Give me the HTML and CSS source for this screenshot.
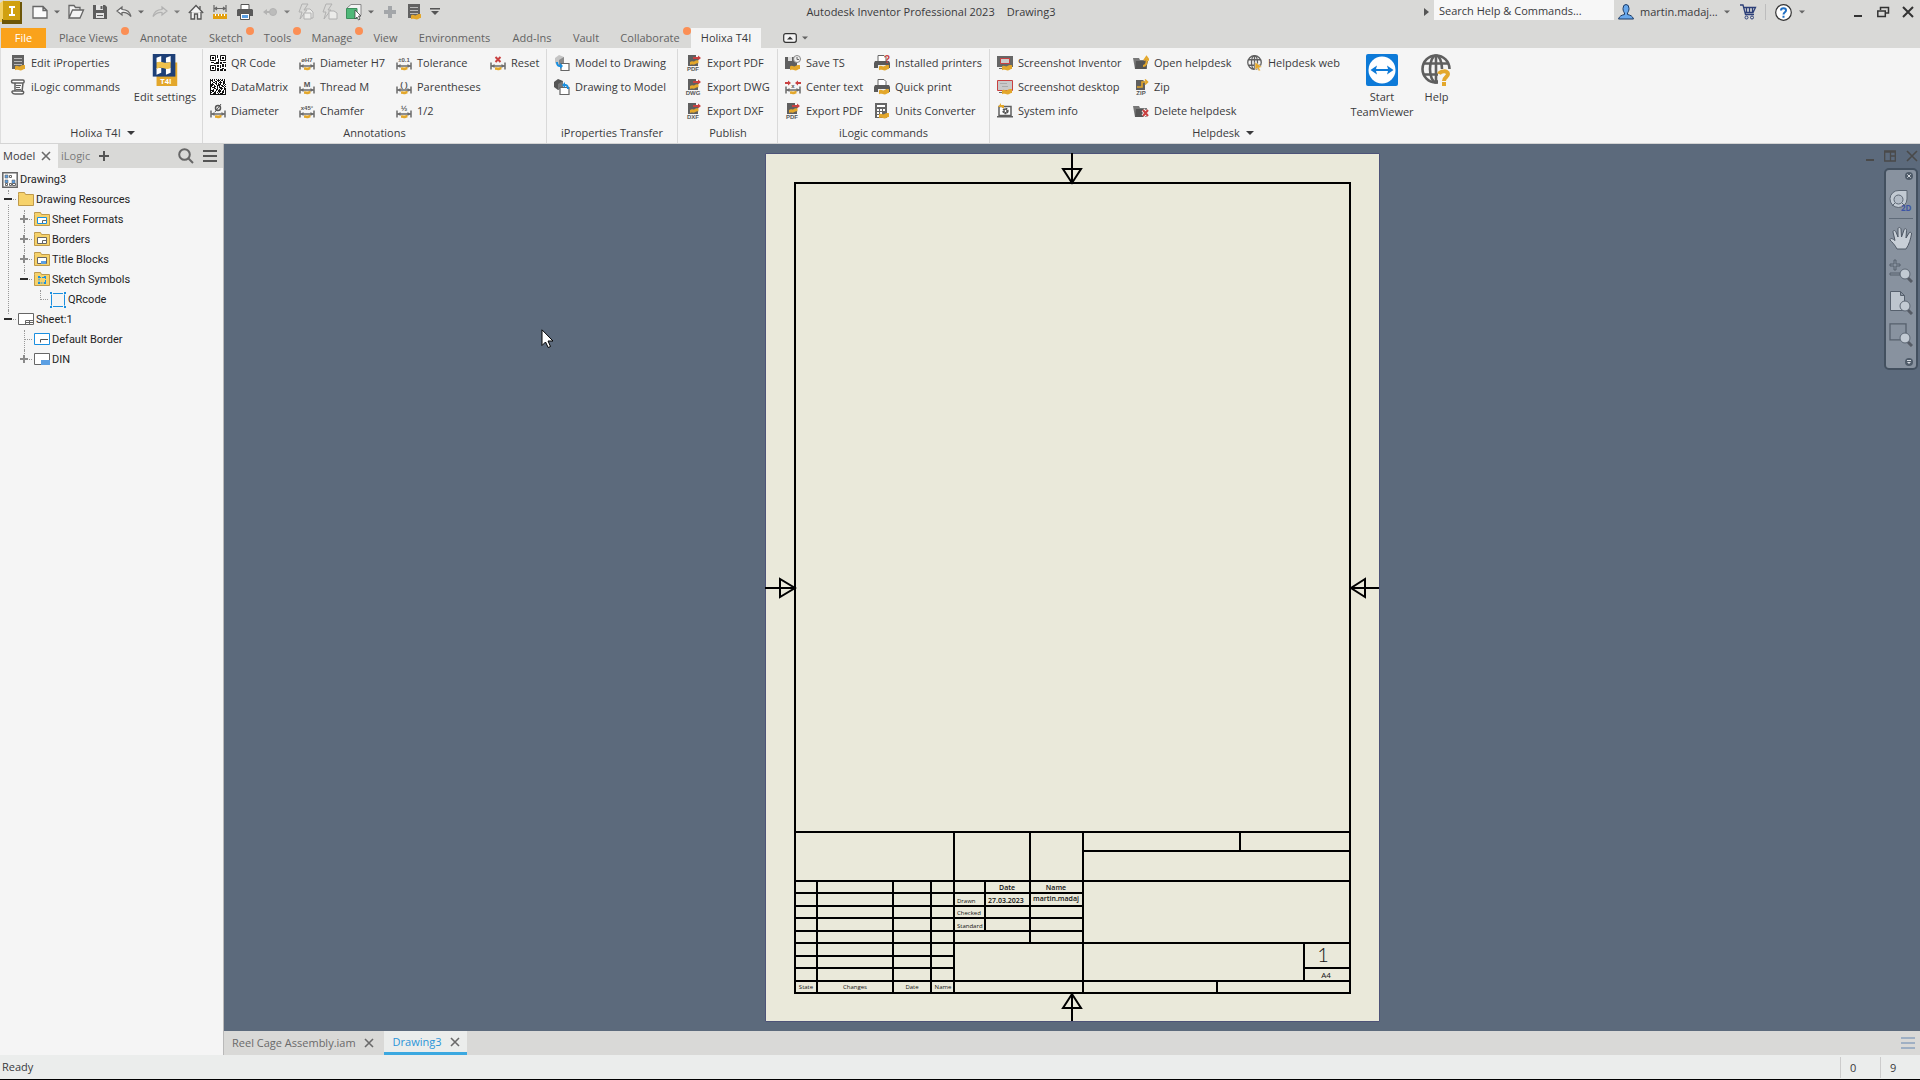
FILE: index.html
```html
<!DOCTYPE html>
<html lang="en">
<head>
<meta charset="utf-8">
<meta name="viewport" content="width=device-width, initial-scale=1">
<title>Autodesk Inventor Professional 2023 - Drawing3</title>
<link rel="stylesheet" href="styles.css">
</head>
<body>
<svg class="sprite" aria-hidden="true">
  <symbol id="wave" viewBox="0 0 16 16"><path fill="#e3a72b" d="M5 11.5c2-1.800 3.500 1 5.500-.4 1.400-1.200 2.800-1.300 4.500-.8v3.700c-1.700-.5-2.300 1.400-4.400 1.400-2-.1-3-1.500-5.600-.2z"/></symbol>
  <symbol id="caret" viewBox="0 0 8 8"><path fill="currentColor" d="M0 2h8L4 6z"/></symbol>
  <symbol id="cross" viewBox="0 0 10 10"><path fill="none" stroke="currentColor" stroke-width="1.600" d="M1 1l8 8M9 1L1 9"/></symbol>
  <symbol id="burger" viewBox="0 0 14 14"><path fill="none" stroke="currentColor" stroke-width="2" d="M0 2h14M0 7h14M0 12h14"/></symbol>
  <symbol id="dim" viewBox="0 0 16 16"><path fill="none" stroke="#6b6b6b" stroke-width="1.500" d="M1 7.500v7M15 7.500v7M1 11h14"/><path fill="#6b6b6b" d="M1.500 11l3-2v4zM14.500 11l-3-2v4z"/><path fill="#e3a72b" d="M5 12.500c2-1 3 .6 4.500-.2.800-.4 1.500-.3 2 0v2.200c-1.500-.3-2 1-3.500.8-1-.1-1.700-.9-3-.3z"/></symbol>
  <symbol id="props" viewBox="0 0 16 16"><path fill="#616161" d="M2 0h12v14H2z"/><path stroke="#b9b9b9" d="M4 3.500h8M4 6.500h8M4 9.500h8"/><use href="#wave"/></symbol>
  <symbol id="script" viewBox="0 0 16 16"><path fill="#fff" stroke="#5f5f5f" stroke-width="1.500" d="M3 1h10c1.500 0 1.500 3 0 3H3C1 4 1 1 3 1zM5 4v8M13 4l-1 9M3 12h9c2.500 0 2 3 0 3H5c-3 0-4-3-2-3z"/><path stroke="#5f5f5f" stroke-width="1.200" d="M6 6.500h5M6 8.500h4M6 10.500h5"/></symbol>
  <symbol id="qr" viewBox="0 0 16 16"><path fill="#fff" d="M0 0h16v16H0z"/><path fill="none" stroke="#111" d="M.5.5h5v5h-5zM10.500.5h5v5h-5zM.5 10.500h5v5h-5z"/><path fill="#111" d="M2 2h2v2H2zM12 2h2v2h-2zM2 12h2v2H2zM7 0h1v3H7zM8 4h1v3H8zM6 7h3v2H6zM1 7h3v1H1zM4 8h2v1H4zM10 7h2v2h-2zM13 7h3v1h-3zM7 10h2v2H7zM10 10h1v3h-1zM12 9h2v3h-2zM15 9h1v3h-1zM7 13h2v3H7zM10 14h3v2h-3zM12 13h2v1h-2zM14 14h2v2h-2z"/></symbol>
  <symbol id="matrix" viewBox="0 0 16 16"><path fill="#fff" d="M0 0h16v16H0z"/><path stroke="#111" stroke-dasharray="1 1" d="M0 .5h16"/><path stroke="#111" d="M.5 0v16M0 15.500h16"/><path stroke="#111" stroke-dasharray="2 1 1 2 3 1" d="M1 1.500h15M3 3.500h13M1 6.500h15M4 9.500h12M2 12.500h14"/><path stroke="#111" stroke-dasharray="1 2 2 1 1 1" d="M2 2.500h14M2 4.500h14M1 7.500h15M3 10.500h13M1 13.500h15"/><path stroke="#111" stroke-dasharray="3 2 1 1" d="M1 5.500h15M2 8.500h14M1 11.500h15M3 14.500h13"/></symbol>
  <symbol id="m2d" viewBox="0 0 16 16"><path fill="#c4c4c4" d="M1 3l4-3 5 2v6L5 11 1 8z"/><path fill="#8b8b8b" d="M5 5l5-3v6l-5 3z"/><path fill="#fff" stroke="#666" stroke-width="1.200" d="M7 8.500h8v7H7z"/><path fill="#1a8fe0" d="M2 7c0 4 2 5 4 5v2l3-3-3-3v2C4.500 10 4 9 4 7z"/></symbol>
  <symbol id="d2m" viewBox="0 0 16 16"><path fill="#555" d="M0 3l4-3 5 2v6l-5 3-4-3z"/><path fill="#777" d="M4 5l5-3v6l-5 3z"/><path fill="#fff" stroke="#666" stroke-width="1.200" d="M6 8.500h9v7H6z"/><path fill="#1a8fe0" d="M15 10c0-4-2-5-4-5V3L8 6l3 3V7c1.500 0 2 1 2 3z"/></symbol>
  <symbol id="exp" viewBox="0 0 16 16"><path fill="#5f5f5f" d="M2 0h8v2h2v9H2z"/><path fill="#c94040" d="M7 2h5V.5L15 3l-3 2.500V4H7z"/><path fill="#e3a72b" d="M4 7c2-1.500 3 0 4.500-.800C10 5 11 5 12.500 5.500v3C11 8 10 9 8.500 9.500 7 10 6 9 4 10z"/></symbol>
  <symbol id="savets" viewBox="0 0 16 16"><path fill="#5f5f5f" d="M0 2h12v12H0z"/><path fill="#ddd" d="M3 2h4v4H3z"/><circle cx="12" cy="4" r="3.500" fill="#eee" stroke="#888"/><path fill="none" stroke="#666" d="M12 2v2.500h2"/><use href="#wave"/></symbol>
  <symbol id="printer" viewBox="0 0 16 16"><path fill="#fff" stroke="#666" d="M4 .5h6l2 2V7H4z"/><path fill="#5a5a5a" d="M1 6h14l1 2v5H0V8z"/><path fill="#eee" d="M4 10h8v4H4z"/><use href="#wave"/></symbol>
  <symbol id="calc" viewBox="0 0 16 16"><path fill="#666" d="M1 0h12v15H1z"/><path fill="#fff" d="M3 2h8v2H3zM3 6h2v2H3zM6 6h2v2H6zM9 6h2v2H9zM3 9h2v2H3zM6 9h2v2H6zM3 12h2v2H3z"/><use href="#wave"/></symbol>
  <symbol id="shot" viewBox="0 0 16 16"><path fill="#666" d="M0 1h16v11H0z"/><path fill="#ccc" stroke="#c94040" d="M3.500 3.500h9v5h-9z"/><path fill="#666" d="M2 13h5v1H2z"/><use href="#wave"/></symbol>
  <symbol id="shotd" viewBox="0 0 16 16"><path fill="#c9c9c9" stroke="#c94040" d="M.5 1.500h15v10H.5z"/><path stroke="#aaa" d="M3 4.500h7M5 7.500h6"/><path fill="#666" d="M2 13h5v1H2z"/><use href="#wave"/></symbol>
  <symbol id="sysinfo" viewBox="0 0 16 16"><path fill="#fff" stroke="#5f5f5f" stroke-width="1.500" d="M2 3.500h12v9H2z"/><path fill="#5f5f5f" d="M0 13h16v1.500H0z"/><circle cx="8.500" cy="8" r="2.200" fill="none" stroke="#555" stroke-width="2" stroke-dasharray="1.700 .6"/><circle cx="8.500" cy="8" r="1.600" fill="none" stroke="#555"/><path fill="#e3a72b" d="M1 4l3-4v2h3v3H5V4z"/></symbol>
  <symbol id="folder" viewBox="0 0 16 16"><path fill="#777" d="M0 3h6l1 2h7v9H2z"/><path fill="#555" d="M3 6h12l-2 8H2z"/></symbol>
  <symbol id="fopen" viewBox="0 0 16 16"><use href="#folder"/><path fill="none" stroke="#e3a72b" stroke-width="2" d="M10 11c3 0 4-3 3.500-7M11 5.500L13.500 2 16 5.500"/></symbol>
  <symbol id="fdel" viewBox="0 0 16 16"><use href="#folder"/><path stroke="#f5f5f5" stroke-width="4" d="M10 7l6 6M16 7l-6 6"/><path stroke="#c94040" stroke-width="2" d="M10 7l5 6M15 7l-5 6"/></symbol>
  <symbol id="globe" viewBox="0 0 32 32"><g fill="none" stroke="#5f5f5f" stroke-width="2.600"><circle cx="15" cy="15" r="13.500"/><ellipse cx="15" cy="15" rx="6" ry="13.500"/><path d="M15 1v28M3 9.500h24M3 20.500h24"/></g></symbol>
  <symbol id="web" viewBox="0 0 16 16"><use href="#globe"/><path fill="#e3a72b" stroke="#f5f5f5" stroke-width=".5" d="M8 7l7 5-3 .5 1.500 3-2 .5-1-3-2.500 2z"/></symbol>
  <symbol id="helpglobe" viewBox="0 0 32 32"><use href="#globe"/><path fill="#f5f5f5" d="M17 15h15v17H17z"/><path fill="none" stroke="#e3a72b" stroke-width="4" d="M18 20c1-3 9-4 9 0 0 3-4 3-4 7"/><path fill="#e3a72b" d="M21 28h4v4h-4z"/></symbol>
  <symbol id="tv" viewBox="0 0 32 32"><path fill="#0d7ad8" d="M2 0h28q2 0 2 2v28q0 2-2 2H2q-2 0-2-2V2q0-2 2-2z"/><circle cx="16" cy="16" r="13.500" fill="#fff"/><path fill="#0d7ad8" d="M4.500 16l6.500-4.500-1 3.500h12l-1-3.500 6.500 4.500-6.500 4.500 1-3.500H10l1 3.500z"/></symbol>
  <symbol id="lens" viewBox="0 0 24 24"><path stroke="#565c66" stroke-width="3" d="M18 18l5 5"/><circle cx="16" cy="15" r="5" fill="#c2cad3" stroke="#5c6673"/></symbol>
  <symbol id="tfolder" viewBox="0 0 16 16"><path fill="#f6d26b" stroke="#bf9a4b" d="M.5 2.500v-2h6l1 2h8v11H.5z"/></symbol>
  <symbol id="t-draw" viewBox="0 0 16 16"><path fill="#fff" stroke="#666" stroke-width="1.500" d="M.8.8h14.400v14.400H.8z"/><path fill="#5b9fe3" stroke="#666" stroke-width=".6" d="M3 3h3v3H3zM3 8h3v3H3zM10 8h3v4h-3z"/><path fill="#fff" stroke="#666" d="M7.500 3.500h2v2h-2zM3.500 11.500h2v2h-2zM7.500 11.500h2v2h-2zM10.500 11.500h3v2h-3z"/></symbol>
  <symbol id="t-fmt" viewBox="0 0 16 16"><use href="#tfolder"/><path fill="#fff" stroke="#1a8fe0" d="M3.500 5.500h9v6h-9z"/><path fill="none" stroke="#666" d="M8.500 11V8.500h4"/></symbol>
  <symbol id="t-bord" viewBox="0 0 16 16"><use href="#tfolder"/><path fill="#fff" stroke="#666" d="M3.500 5.500h9v6h-9zM8.500 11.500v-3h4"/></symbol>
  <symbol id="t-title" viewBox="0 0 16 16"><use href="#tfolder"/><path fill="#fff" stroke="#666" d="M3.500 5.500h9v6h-9z"/><path fill="#5b9fe3" d="M7 9h5v3H7z"/></symbol>
  <symbol id="t-sym" viewBox="0 0 16 16"><use href="#tfolder"/><path fill="none" stroke="#1a8fe0" stroke-dasharray="2 1" d="M5 5.500h6.500V11H5z"/><path fill="#1a8fe0" d="M4 4h2v2H4zM10 4h2v2h-2zM4 10h2v2H4zM10 10h2v2h-2z"/></symbol>
  <symbol id="t-qr" viewBox="0 0 16 16"><path fill="none" stroke="#1a8fe0" d="M1.500 2.500v11M14.500 2.500v11M3 1.500h10M3 14.500h10"/><path fill="#1a8fe0" d="M0 0h2v2H0zM14 0h2v2h-2zM0 14h2v2H0zM14 14h2v2h-2z"/></symbol>
  <symbol id="t-sheet" viewBox="0 0 16 16"><path fill="#fff" stroke="#666" d="M.5 1.500h15v11H.5zM7.500 12.500v-4h8M7.500 10.500h8M11.500 8.500v4"/></symbol>
  <symbol id="t-def" viewBox="0 0 16 16"><path fill="#fff" stroke="#1a8fe0" d="M.5 1.500h15v11H.5z"/><path fill="none" stroke="#555" d="M6.500 10.500v-3H14"/></symbol>
  <symbol id="t-din" viewBox="0 0 16 16"><path fill="#fff" stroke="#666" d="M.5 1.500h15v11H.5z"/><path fill="#5b9fe3" d="M7 8h9v5H7z"/></symbol>
</svg>

<header class="titlebar">
  <div class="quick">
    <button class="logo" aria-label="Application menu"><svg width="24" height="24" viewBox="0 0 24 24"><path fill="#f3cf62" d="M0 3l4-3v20l-2 2H0z"/><path fill="#6d5608" d="M2 19h18V2h2v22H2z"/><path fill="#d0a010" d="M3 1h17v19H3z"/><path fill="#fff" d="M9 6h6v2h-2v6h2v2H9v-2h2V8H9z"/></svg></button>
    <button class="q" aria-label="New"><svg width="16" height="16" viewBox="0 0 16 16"><path fill="#fbfbfb" stroke="#666" stroke-width="1.300" d="M1 2.500h10l4 4V14H1zM11 2.500v4h4"/></svg><svg class="dd"><use href="#caret"/></svg></button>
    <button class="q" aria-label="Open"><svg width="16" height="16" viewBox="0 0 16 16"><path fill="#f4f4f4" stroke="#666" stroke-width="1.300" d="M1 14V1.500h5l1.500 2H12V6M1 14L4.500 6H15.500L12 14z"/></svg></button>
    <button class="q" aria-label="Save"><svg width="16" height="16" viewBox="0 0 16 16"><path fill="#5d5d5d" d="M1 1h12l2 2v12H1z"/><path fill="#e4e4e4" d="M4 1h7v5H4zM4 9h8v5H4z"/><path fill="#5d5d5d" d="M8.500 2h2v3h-2zM5 11h6v1H5z"/></svg></button>
    <button class="q" aria-label="Undo"><svg width="16" height="16" viewBox="0 0 16 16"><path fill="#f4f4f4" stroke="#666" stroke-width="1.200" d="M6 3L1 7l5 4V8.500c4-.5 6 .5 9 4C14 8 11 5.500 6 5.500z"/></svg><svg class="dd"><use href="#caret"/></svg></button>
    <button class="q dim" aria-label="Redo"><svg width="16" height="16" viewBox="0 0 16 16"><path fill="none" stroke="#a8a8a8" stroke-width="1.200" d="M10 3l5 4-5 4V8.500c-4-.5-6 .5-9 4C2 8 5 5.500 10 5.500z"/></svg><svg class="dd"><use href="#caret"/></svg></button>
    <button class="q" aria-label="Home"><svg width="16" height="16" viewBox="0 0 16 16"><path fill="#f4f4f4" stroke="#555" stroke-width="1.300" d="M3 8v7h3.500v-5h3v5H13V8M.8 9L8 1.500 15.200 9M12 5V2"/></svg></button>
    <button class="q" aria-label="Measure"><svg width="16" height="16" viewBox="0 0 16 16"><path fill="none" stroke="#666" stroke-width="1.200" d="M2 1v7M14 1v7M2 4.500h12M5 3L3 4.500 5 6M11 3l2 1.500L11 6"/><path fill="#e3a010" d="M1 10h14v5H1z"/><path stroke="#fff" d="M3.500 10v2M6.500 10v2M9.500 10v2M12.500 10v2"/></svg></button>
    <button class="q" aria-label="Print"><svg width="18" height="16" viewBox="0 0 16 16"><path fill="#fff" stroke="#555" d="M4 .5h8V6H4z"/><path fill="#5a5a5a" d="M1 5h14l1 1v6H0V6z"/><path fill="#fff" stroke="#555" d="M3.500 9.500h9v6h-9z"/><path fill="#5b9fe3" d="M5 11h6v3H5z"/></svg></button>
    <button class="q dim" aria-label="Update view"><svg width="16" height="16" viewBox="0 0 16 16"><circle cx="11" cy="8" r="3.500" fill="#b5b5b5" stroke="#aaa"/><path fill="#aaa" d="M1 8l4-3v6zM5 7h3v2H5z"/></svg><svg class="dd"><use href="#caret"/></svg></button>
    <button class="q dim" aria-label="Update all"><svg width="16" height="16" viewBox="0 0 16 16"><path fill="#f0f0ee" stroke="#a8a8a8" d="M6 9V5h6l3 3v6H7z"/><path fill="#d9d9d7" stroke="#a8a8a8" d="M4 0h6L6 6h3l-7 9 2-7H1z"/><path fill="#f0f0ee" stroke="#a8a8a8" d="M6 9h7v6H6z"/></svg></button>
    <button class="q dim" aria-label="Update"><svg width="16" height="16" viewBox="0 0 16 16"><path fill="#d9d9d7" stroke="#a8a8a8" d="M4 0h6L6 6h3l-7 9 2-7H1z"/><path fill="#f0f0ee" stroke="#a8a8a8" d="M7 7h5l3 2v6H7z"/></svg></button>
    <button class="q" aria-label="Select"><svg width="16" height="16" viewBox="0 0 16 16"><path fill="#f4f4f4" stroke="#888" d="M1 4l4-3.500h10V11l-3 3.500"/><path fill="#4fb878" stroke="#3c8f5c" d="M.5 4.500H11v10H.5z"/><path fill="#fff" stroke="#444" stroke-width=".8" d="M9 6v9l2-2 1.500 3 1.500-.800L12.500 12H15z"/></svg><svg class="dd"><use href="#caret"/></svg></button>
    <button class="q" aria-label="Add"><svg width="16" height="16" viewBox="0 0 16 16"><path fill="#a3a6a9" d="M6 2h4v4h4v4h-4v4H6v-4H2V6h4z"/></svg></button>
    <button class="q" aria-label="iProperties"><svg width="16" height="16"><use href="#props"/></svg></button>
    <button class="q" aria-label="Customize toolbar"><svg width="10" height="10" viewBox="0 0 10 10"><path fill="#555" d="M0 1h10v1.500H0zM1 4h8L5 8z"/></svg></button>
  </div>
  <h1 class="caption"><span>Autodesk Inventor Professional 2023</span><span>Drawing3</span></h1>
  <div class="account">
    <svg class="arrow" width="5" height="8" viewBox="0 0 5 8"><path fill="#555" d="M0 0l5 4-5 4z"/></svg>
    <input class="search" type="text" aria-label="Search help and commands" placeholder="Search Help &amp; Commands...">
    <button class="user"><svg width="16" height="16" viewBox="0 0 16 16"><path fill="#68a8ec" stroke="#1c3b66" d="M5 4.500a3 4 0 016 0c0 2.500-1 3.500-1.500 4.500v1.500c3 .7 5 1.500 6 4.500H.5c1-3 3-3.800 6-4.500V9C6 8 5 7 5 4.500z"/></svg>martin.madaj...<svg class="dd"><use href="#caret"/></svg></button>
    <button class="cart" aria-label="App store"><svg width="16" height="16" viewBox="0 0 16 16"><path fill="none" stroke="#2c3f78" stroke-width="1.300" d="M0 1h3l2.500 9.500H14M3.500 3.500H15.500L13 8.500H5M6.500 4v4M9.500 4v4M12.500 4v4"/><circle cx="6.500" cy="13.500" r="1.500" fill="none" stroke="#2c3f78"/><circle cx="12" cy="13.500" r="1.500" fill="none" stroke="#2c3f78"/></svg></button>
    <button class="help" aria-label="Help"><svg width="17" height="17" viewBox="0 0 17 17"><circle cx="8.500" cy="8.500" r="7.800" fill="#fff" stroke="#333" stroke-width="1.200"/><path fill="none" stroke="#1f6fc4" stroke-width="2" d="M6 6.500c0-3 5-3 5 0 0 1.800-2.500 1.800-2.500 4M8.500 11.700v2"/></svg><svg class="dd"><use href="#caret"/></svg></button>
    <div class="winbtns">
      <button aria-label="Minimize"><svg width="12" height="12" viewBox="0 0 12 12"><path fill="#333" d="M2 9h8v2H2z"/></svg></button>
      <button aria-label="Restore"><svg width="12" height="12" viewBox="0 0 12 12"><path fill="none" stroke="#333" stroke-width="1.500" d="M3.500 4V1.500h8V7H9M.8 5h7.500v5.500H.8z"/></svg></button>
      <button aria-label="Close"><svg width="12" height="12" viewBox="0 0 12 12"><path stroke="#333" stroke-width="2" d="M1 1l10 10M11 1L1 11"/></svg></button>
    </div>
  </div>
</header>

<nav class="tabs" aria-label="Ribbon">
  <button class="tab file">File</button>
  <button class="tab dot">Place Views</button>
  <button class="tab">Annotate</button>
  <button class="tab dot">Sketch</button>
  <button class="tab dot">Tools</button>
  <button class="tab dot">Manage</button>
  <button class="tab">View</button>
  <button class="tab">Environments</button>
  <button class="tab">Add-Ins</button>
  <button class="tab">Vault</button>
  <button class="tab dot">Collaborate</button>
  <button class="tab active">Holixa T4I</button>
  <button class="tab fold" aria-label="Minimize ribbon"><svg width="14" height="10" viewBox="0 0 14 10"><rect x=".7" y=".7" width="12.600" height="8.600" rx="2" fill="#f4f4f4" stroke="#333" stroke-width="1.200"/><path fill="#333" d="M4 6.500h6L7 3.500z"/></svg><svg class="dd"><use href="#caret"/></svg></button>
</nav>

<div class="ribbon">
  <section class="group g-holixa">
    <div class="cols">
      <div class="col">
        <button class="cmd"><svg><use href="#props"/></svg>Edit iProperties</button>
        <button class="cmd"><svg><use href="#script"/></svg>iLogic commands</button>
      </div>
      <button class="big"><svg viewBox="0 0 26 34"><path fill="#e3a72b" d="M4 9h22v25H4z"/><path fill="#1d3f77" d="M0 0h24v24H0z"/><path fill="#fff" d="M4 4l5-2v7H4zM14 4l5-2v7h-5zM4 15h5v5l-5 2zM14 15h5v5l-5 2z"/><path fill="#f0c14b" d="M4 9c5-3 9 3 15-1v7c-6 3-9-3-15 1z"/><text class="t4i-text" x="14" y="32">T4I</text></svg>Edit settings</button>
    </div>
    <button class="label">Holixa T4I<svg class="dd"><use href="#caret"/></svg></button>
  </section>
  <section class="group g-annot">
    <div class="cols">
      <div class="col">
        <button class="cmd"><svg><use href="#qr"/></svg>QR Code</button>
        <button class="cmd"><svg><use href="#matrix"/></svg>DataMatrix</button>
        <button class="cmd"><svg viewBox="0 0 16 16"><use href="#dim"/><circle cx="8" cy="5" r="2.500" fill="none" stroke="#555" stroke-width="1.500"/><path stroke="#555" d="M5 9l6-8"/></svg>Diameter</button>
      </div>
      <div class="col">
        <button class="cmd"><svg viewBox="0 0 16 16"><use href="#dim"/><text class="glyph" x="8" y="7">øH7</text></svg>Diameter H7</button>
        <button class="cmd"><svg viewBox="0 0 16 16"><use href="#dim"/><text class="glyph glyph-l" x="8" y="8">M</text></svg>Thread M</button>
        <button class="cmd"><svg viewBox="0 0 16 16"><use href="#dim"/><text class="glyph" x="8" y="7">x45°</text></svg>Chamfer</button>
      </div>
      <div class="col">
        <button class="cmd"><svg viewBox="0 0 16 16"><use href="#dim"/><text class="glyph" x="8" y="7">±0.1</text></svg>Tolerance</button>
        <button class="cmd"><svg viewBox="0 0 16 16"><use href="#dim"/><text class="glyph glyph-l" x="8" y="8">( )</text></svg>Parentheses</button>
        <button class="cmd"><svg viewBox="0 0 16 16"><use href="#dim"/><text class="glyph glyph-l" x="8" y="8">½</text></svg>1/2</button>
      </div>
      <div class="col">
        <button class="cmd"><svg viewBox="0 0 16 16"><use href="#dim"/><path stroke="#c94040" stroke-width="2" d="M5.500 2l5 5M10.500 2l-5 5"/></svg>Reset</button>
      </div>
    </div>
    <div class="label">Annotations</div>
  </section>
  <section class="group g-transfer">
    <div class="cols">
      <div class="col">
        <button class="cmd"><svg><use href="#m2d"/></svg>Model to Drawing</button>
        <button class="cmd"><svg><use href="#d2m"/></svg>Drawing to Model</button>
      </div>
    </div>
    <div class="label">iProperties Transfer</div>
  </section>
  <section class="group g-publish">
    <div class="cols">
      <div class="col">
        <button class="cmd"><svg viewBox="0 0 16 16"><use href="#exp"/><text class="glyph" x="7" y="16">PDF</text></svg>Export PDF</button>
        <button class="cmd"><svg viewBox="0 0 16 16"><use href="#exp"/><text class="glyph" x="7" y="16">DWG</text></svg>Export DWG</button>
        <button class="cmd"><svg viewBox="0 0 16 16"><use href="#exp"/><text class="glyph" x="7" y="16">DXF</text></svg>Export DXF</button>
      </div>
    </div>
    <div class="label">Publish</div>
  </section>
  <section class="group g-ilogic">
    <div class="cols">
      <div class="col">
        <button class="cmd"><svg><use href="#savets"/></svg>Save TS</button>
        <button class="cmd"><svg viewBox="0 0 16 16"><use href="#dim"/><path fill="#c94040" d="M0 3h3V1.500L6 4 3 6.500V5H0zM16 3h-3V1.500L10 4l3 2.500V5h3z"/><text class="glyph" x="8" y="9">x</text></svg>Center text</button>
        <button class="cmd"><svg viewBox="0 0 16 16"><use href="#exp"/><text class="glyph" x="7" y="16">PDF</text></svg>Export PDF</button>
      </div>
      <div class="col">
        <button class="cmd"><svg viewBox="0 0 16 16"><use href="#printer"/><text class="glyph glyph-red" x="13" y="8">?</text></svg>Installed printers</button>
        <button class="cmd"><svg><use href="#printer"/></svg>Quick print</button>
        <button class="cmd"><svg><use href="#calc"/></svg>Units Converter</button>
      </div>
    </div>
    <div class="label">iLogic commands</div>
  </section>
  <section class="group g-help">
    <div class="cols">
      <div class="col">
        <button class="cmd"><svg><use href="#shot"/></svg>Screenshot Inventor</button>
        <button class="cmd"><svg><use href="#shotd"/></svg>Screenshot desktop</button>
        <button class="cmd"><svg><use href="#sysinfo"/></svg>System info</button>
      </div>
      <div class="col">
        <button class="cmd"><svg><use href="#fopen"/></svg>Open helpdesk</button>
        <button class="cmd"><svg viewBox="0 0 16 16"><path fill="#5f5f5f" d="M3 1h7l2 2v8H3z"/><path fill="none" stroke="#e3a72b" stroke-width="1.600" d="M4 8h5V3h6M12 .5L14.500 3 12 5.500"/><text class="glyph" x="8" y="16">ZIP</text></svg>Zip</button>
        <button class="cmd"><svg><use href="#fdel"/></svg>Delete helpdesk</button>
      </div>
      <div class="col">
        <button class="cmd"><svg><use href="#web"/></svg>Helpdesk web</button>
      </div>
      <button class="big"><svg><use href="#tv"/></svg>Start TeamViewer</button>
      <button class="big"><svg><use href="#helpglobe"/></svg>Help</button>
    </div>
    <button class="label">Helpdesk<svg class="dd"><use href="#caret"/></svg></button>
  </section>
</div>

<div class="main">
  <aside class="browser">
    <div class="browser-tabs">
      <button class="btab on">Model<svg class="x"><use href="#cross"/></svg></button>
      <button class="btab">iLogic</button>
      <button class="add" aria-label="Add panel"><svg width="10" height="10" viewBox="0 0 10 10"><path stroke="#555" stroke-width="2" d="M5 0v10M0 5h10"/></svg></button>
      <button class="find" aria-label="Search"><svg width="16" height="16" viewBox="0 0 16 16"><circle cx="6.500" cy="6.500" r="5.300" fill="none" stroke="#666" stroke-width="2"/><path stroke="#666" stroke-width="2" d="M10.500 10.500l4.500 4.500"/></svg></button>
      <button class="menu" aria-label="Panel menu"><svg width="14" height="14"><use href="#burger"/></svg></button>
    </div>
    <ul class="tree">
      <li><span class="node"><svg><use href="#t-draw"/></svg>Drawing3</span>
        <ul>
          <li class="open"><span class="node"><svg><use href="#tfolder"/></svg>Drawing Resources</span>
            <ul>
              <li class="shut"><span class="node"><svg><use href="#t-fmt"/></svg>Sheet Formats</span></li>
              <li class="shut"><span class="node"><svg><use href="#t-bord"/></svg>Borders</span></li>
              <li class="shut"><span class="node"><svg><use href="#t-title"/></svg>Title Blocks</span></li>
              <li class="open"><span class="node"><svg><use href="#t-sym"/></svg>Sketch Symbols</span>
                <ul><li><span class="node"><svg><use href="#t-qr"/></svg>QRcode</span></li></ul>
              </li>
            </ul>
          </li>
          <li class="open"><span class="node"><svg><use href="#t-sheet"/></svg>Sheet:1</span>
            <ul>
              <li><span class="node"><svg><use href="#t-def"/></svg>Default Border</span></li>
              <li class="shut"><span class="node"><svg><use href="#t-din"/></svg>DIN</span></li>
            </ul>
          </li>
        </ul>
      </li>
    </ul>
  </aside>

  <div class="work">
    <main class="canvas">
      <svg class="sheet" viewBox="0 0 614 868" role="img" aria-label="A4 drawing sheet">
        <path fill="#eae9da" stroke="#4d5378" d="M.5.5h614v868H.5z"/>
        <g fill="none" stroke="#000" stroke-width="2">
          <path d="M30 30h555v810H30z"/>
          <path d="M307 0v30M298 16h18l-9 14zM307 868v-28M298 855h18l-9-14zM0 435h30M15 426v18l15-9zM614 435h-28M600 426v18l-14-9z"/>
          <path d="M30 679h555M318 698h267M30 728h555M30 740h288M30 753h288M30 765h288M30 778h159M189 778h129M30 790h555M30 803h159M30 815h159M539 815h46M30 828h555"/>
          <path d="M52 728v112M128 728v112M166 728v112M189 679v161M220 728v50M265 679v111M318 679v161M475 679v19M452 828v12M539 790v38"/>
        </g>
        <g class="iso iso-m">
          <text x="242" y="737" class="mid">Date</text>
          <text x="291" y="737" class="mid">Name</text>
          <text x="223" y="750">27.03.2023</text>
          <text x="268" y="748">martin.madaj</text>
          <text x="561" y="825" class="mid iso-n">A4</text>
        </g>
        <g class="iso iso-s">
          <text x="192" y="750">Drawn</text>
          <text x="192" y="762">Checked</text>
          <text x="192" y="775">Standard</text>
          <text x="41" y="836" class="mid">State</text>
          <text x="90" y="836" class="mid">Changes</text>
          <text x="147" y="836" class="mid">Date</text>
          <text x="178" y="836" class="mid">Name</text>
        </g>
        <text x="558" y="809" class="iso iso-l mid">1</text>
      </svg>

      <div class="docbtns">
        <button aria-label="Minimize document"><svg width="12" height="12" viewBox="0 0 12 12"><path fill="#4a4a4a" d="M4 9h8v2H4z"/></svg></button>
        <button aria-label="Restore document"><svg width="12" height="12" viewBox="0 0 12 12"><path fill="none" stroke="#4a4a4a" stroke-width="1.300" d="M.7 1h10.600v10H.7zM.7 2h11M6.500 2v9M6.500 6h5"/></svg></button>
        <button aria-label="Close document"><svg width="12" height="12" viewBox="0 0 12 12"><path stroke="#4a4a4a" stroke-width="1.600" d="M1 1l10 10M11 1L1 11"/></svg></button>
      </div>

      <div class="navbar">
        <button class="tiny" aria-label="Close navigation bar"><svg width="8" height="8" viewBox="0 0 8 8"><circle cx="4" cy="4" r="4" fill="#4f5b69"/><path stroke="#d5dae0" d="M2.300 2.300l3.400 3.400M5.700 2.300L2.300 5.700"/></svg></button>
        <button class="tool wheel" aria-label="Steering wheel 2D"><svg width="24" height="24" viewBox="0 0 24 24"><path fill="#c2cad3" stroke="#5c6673" d="M10 1.500h8V10a8.500 8.500 0 11-8-8.500z"/><circle cx="9.500" cy="10.500" r="4.500" fill="#b3bcc7" stroke="#5c6673"/><path stroke="#5c6673" d="M3 17l3-3M16 17l-3-3"/><text class="two-d" x="12" y="22">2D</text></svg></button>
        <button class="tool" aria-label="Pan"><svg width="24" height="24" viewBox="0 0 24 24"><path fill="#c8cfd7" stroke="#4f5865" d="M8 22c-2-4-5-7-7-9 0-2 2-2 5 .5L4 5c0-2 2-2 3 0l2 5V2c0-2 2.500-2 3 0l.5 8L15 3c.5-2 3-1.500 2.500.5L17 11l3-5c1-1.500 3-.5 2.500 1-1 5-2 10-5.500 15z"/></svg></button>
        <button class="tool" aria-label="Zoom"><svg width="24" height="24" viewBox="0 0 24 24"><path fill="none" stroke="#56606d" d="M5 1h2v4h4v2H7v4H5V7H1V5h4zM1 14h10v2H1z"/><use href="#lens"/></svg></button>
        <button class="tool" aria-label="Zoom all"><svg width="24" height="24" viewBox="0 0 24 24"><path fill="#bdc5ce" stroke="#56606d" d="M1.500.5h10l4 4v15h-14zM11.500.5v4h4"/><use href="#lens"/></svg></button>
        <button class="tool" aria-label="Zoom window"><svg width="24" height="24" viewBox="0 0 24 24"><path fill="none" stroke="#56606d" stroke-width="1.300" d="M1 .8h16v16H1z"/><use href="#lens"/></svg></button>
        <button class="tiny last" aria-label="Customize navigation bar"><svg width="8" height="8" viewBox="0 0 8 8"><circle cx="4" cy="4" r="4" fill="#4f5b69"/><path fill="#d5dae0" d="M2 2h4v1H2zM2 4h4L4 6z"/></svg></button>
      </div>

      <svg class="cursor" width="14" height="20" viewBox="0 0 14 20"><path fill="#fff" stroke="#000" d="M1 .8v15.700l3.500-3.500 2.700 5.500 2.300-1-2.500-5.500h5z"/></svg>
    </main>
    <div class="doctabs">
      <button class="doc">Reel Cage Assembly.iam<svg class="x"><use href="#cross"/></svg></button>
      <button class="doc on">Drawing3<svg class="x"><use href="#cross"/></svg></button>
      <button class="doclist" aria-label="Document list"><svg width="14" height="14"><use href="#burger"/></svg></button>
    </div>
  </div>
</div>

<footer class="status"><span class="msg">Ready</span><span class="count">0</span><span class="count">9</span></footer>
</body>
</html>
```
FILE: styles.css
```css
* { box-sizing: border-box; }

body {
  margin: 0;
  height: 100vh;
  display: flex;
  flex-direction: column;
  overflow: hidden;
  background: #d9d9d7;
  color: #3a3a3c;
  font: 11px/16px "Open Sans", "Noto Sans", sans-serif;
}

button {
  margin: 0;
  padding: 0;
  border: 0;
  background: none;
  color: inherit;
  font: inherit;
  white-space: nowrap;
}

svg { display: block; flex: none; overflow: visible; }
.sprite { position: absolute; width: 0; height: 0; overflow: hidden; }
.dd { width: 6px; height: 6px; }
.x { width: 10px; height: 10px; color: #6a6a6a; }
.dim { opacity: .8; }

.glyph { font: bold 6px "Liberation Sans", sans-serif; fill: #555; text-anchor: middle; }
.glyph-l { font-size: 8px; }
.glyph-red { font-size: 10px; fill: #c94040; }
.t4i-text { font: bold 8px "Open Sans", sans-serif; fill: #fff; text-anchor: middle; }

/* Title bar */
.titlebar {
  display: grid;
  grid-template-columns: 42% auto 1fr;
  height: 28px;
  flex: none;
}
.quick { display: flex; align-items: center; height: 24px; gap: 8px; color: #666; }
.q { display: flex; align-items: center; gap: 6px; }
.caption {
  margin: 0;
  display: flex;
  gap: 12px;
  align-items: center;
  height: 24px;
  font-size: 11px;
  font-weight: 400;
}
.account { display: flex; align-items: center; justify-content: flex-end; height: 24px; padding-right: 6px; }
.search {
  width: 180px;
  height: 20px;
  margin: 0 4px 0 5px;
  padding: 0 5px;
  border: 0;
  background: #f7f7f7;
  font: inherit;
  align-self: flex-start;
}
.search::placeholder { color: #3a3a3c; opacity: 1; }
.user { display: flex; align-items: center; gap: 6px; width: 112px; }
.user .dd { margin-left: auto; color: #666; }
.cart { margin-left: 10px; padding-right: 9px; border-right: 1px solid #bdbdbd; }
.help { display: flex; align-items: center; gap: 7px; margin-left: 9px; color: #666; }
.winbtns { display: flex; gap: 13px; margin-left: 47px; }

/* Ribbon tabs */
.tabs {
  display: grid;
  grid-template-columns: 47px 81px 69px 56px 47px 62px 45px 93px 62px 46px 82px 70px 1fr;
  height: 20px;
  padding-left: 1px;
  flex: none;
}
.tab { position: relative; line-height: 20px; color: #636363; }
.tab.file { width: 45px; background: #faa21b; color: #fff; }
.tab.active { background: #f5f5f5; color: #3a3a3c; }
.tab.dot::after {
  content: "";
  position: absolute;
  right: 0;
  top: -1px;
  width: 8px;
  height: 8px;
  border-radius: 50%;
  background: #fb8f55;
}
.fold { display: flex; align-items: center; gap: 5px; padding-left: 22px; }

/* Ribbon */
.ribbon {
  display: flex;
  height: 96px;
  flex: none;
  padding: 1px 0 0 1px;
  background: #f5f5f5;
  border-bottom: 1px solid #d4d4d4;
  box-shadow: inset 1px 0 #ddd;
}
.group { display: flex; flex-direction: column; padding: 2px 0 0 5px; border-right: 1px solid #d9d9d9; }
.cols { display: grid; height: 72px; }
.cmd { display: flex; align-items: center; gap: 5px; height: 24px; padding-left: 2px; }
.cmd svg { width: 16px; height: 16px; }
.label { display: flex; align-items: center; justify-content: center; gap: 6px; height: 20px; margin-left: -5px; }
.label .dd { width: 8px; height: 8px; }
.big { display: flex; flex-direction: column; align-items: center; padding-top: 3px; line-height: 15px; white-space: normal; }
.big svg { width: 32px; height: 32px; margin-bottom: 3px; }
.g-holixa { width: 202px; padding-left: 7px; }
.g-holixa .cols { grid-template-columns: 122px 70px; }
.g-annot { width: 344px; }
.g-annot .cols { grid-template-columns: 89px 97px 94px 1fr; }
.g-transfer { width: 131px; }
.g-publish { width: 100px; padding-left: 6px; }
.g-ilogic { width: 212px; }
.g-ilogic .cols { grid-template-columns: 89px 1fr; }
.g-help { width: 466px; border-right: 0; }
.g-help .cols { grid-template-columns: 136px 114px 102px 70px 1fr; }

/* Main area */
.main { flex: 1; display: flex; min-height: 0; }
.browser { width: 224px; flex: none; background: #f5f5f5; border-right: 1px solid #b9b9b9; color: #1e1e1e; }
.browser-tabs { display: flex; align-items: center; height: 24px; margin-bottom: 2px; background: #d9d9d7; }
.btab { height: 24px; padding-left: 3px; color: #7a7a7a; }
.btab.on { display: flex; align-items: center; justify-content: space-between; width: 58px; padding-right: 7px; background: #f5f5f5; color: #3a3a3c; }
.add { margin-left: 9px; }
.find { margin-left: auto; }
.menu { margin: 0 6px 0 9px; color: #555; }

.tree, .tree ul { margin: 0; padding: 0; list-style: none; }
.tree { font-family: Roboto, "Open Sans", sans-serif; }
.tree ul { padding-left: 16px; }
.node { display: flex; align-items: center; gap: 2px; height: 20px; padding-left: 2px; }
.node svg { width: 16px; height: 16px; }
.tree li { position: relative; }
.tree li li::before {
  content: "";
  position: absolute;
  left: -8px;
  top: 0;
  height: 100%;
  border-left: 1px dotted #999;
}
.tree li li:last-child::before { height: 10px; }
.tree li li > .node::before {
  content: "";
  position: absolute;
  left: -8px;
  top: 9px;
  width: 8px;
  border-top: 1px dotted #999;
}
.open > .node::after, .shut > .node::after {
  content: "";
  position: absolute;
  left: -13px;
  top: 4px;
  width: 10px;
  height: 11px;
  background: linear-gradient(#2b2b2b, #2b2b2b) 1px 4px / 8px 2px no-repeat, #f5f5f5;
}
.shut > .node::after {
  background:
    linear-gradient(#8a8a8a, #8a8a8a) 1px 4px / 8px 2px no-repeat,
    linear-gradient(#8a8a8a, #8a8a8a) 4px 1px / 2px 8px no-repeat,
    #f5f5f5;
}

.work { flex: 1; min-width: 0; display: flex; flex-direction: column; }
.canvas { position: relative; flex: 1; min-height: 0; padding: 9px 0 10px; background: #5c6a7c; }
.sheet { width: 100%; height: 100%; }
.iso { font-family: "Open Sans", sans-serif; fill: #111; }
.iso-s { font-size: 6px; }
.iso-m { font-size: 7px; font-weight: 600; }
.iso-n { font-size: 8px; font-weight: 400; }
.iso-l { font-family: Lato, sans-serif; font-size: 20px; font-weight: 300; }
.mid { text-anchor: middle; }

.docbtns { position: absolute; right: 2px; top: 6px; display: flex; gap: 10px; }
.cursor { position: absolute; left: 317px; top: 185px; }
.navbar {
  position: absolute;
  right: 2px;
  top: 24px;
  width: 34px;
  height: 202px;
  display: flex;
  flex-direction: column;
  align-items: flex-start;
  gap: 8px;
  padding: 2px 3px;
  border: 2px solid #43505f;
  border-radius: 5px;
  background: #88929f;
}
.tiny { align-self: flex-end; }
.tiny.last { margin-top: auto; }
.wheel { height: 31px; padding-bottom: 4px; border-bottom: 1px solid #5f6b79; }
.two-d { font: bold 8px "Open Sans", sans-serif; fill: #3c55a5; }

.doctabs { display: flex; height: 24px; flex: none; background: #d9d9d7; color: #6a6a6a; }
.doc { display: flex; align-items: center; gap: 8px; padding: 0 10px 0 8px; }
.doc.on { padding: 0 7px 0 9px; background: #ebedec; border-bottom: 3px solid #3ba8e0; color: #2a94d8; }
.doclist { margin: 0 5px 0 auto; color: #9fb0c4; }

.status {
  display: flex;
  align-items: center;
  height: 25px;
  flex: none;
  background: #ebedec;
  border-bottom: 1px solid #000;
}
.msg { flex: 1; padding-left: 2px; }
.count { width: 40px; padding-left: 9px; border-left: 1px solid #ccc; line-height: 21px; }
```
